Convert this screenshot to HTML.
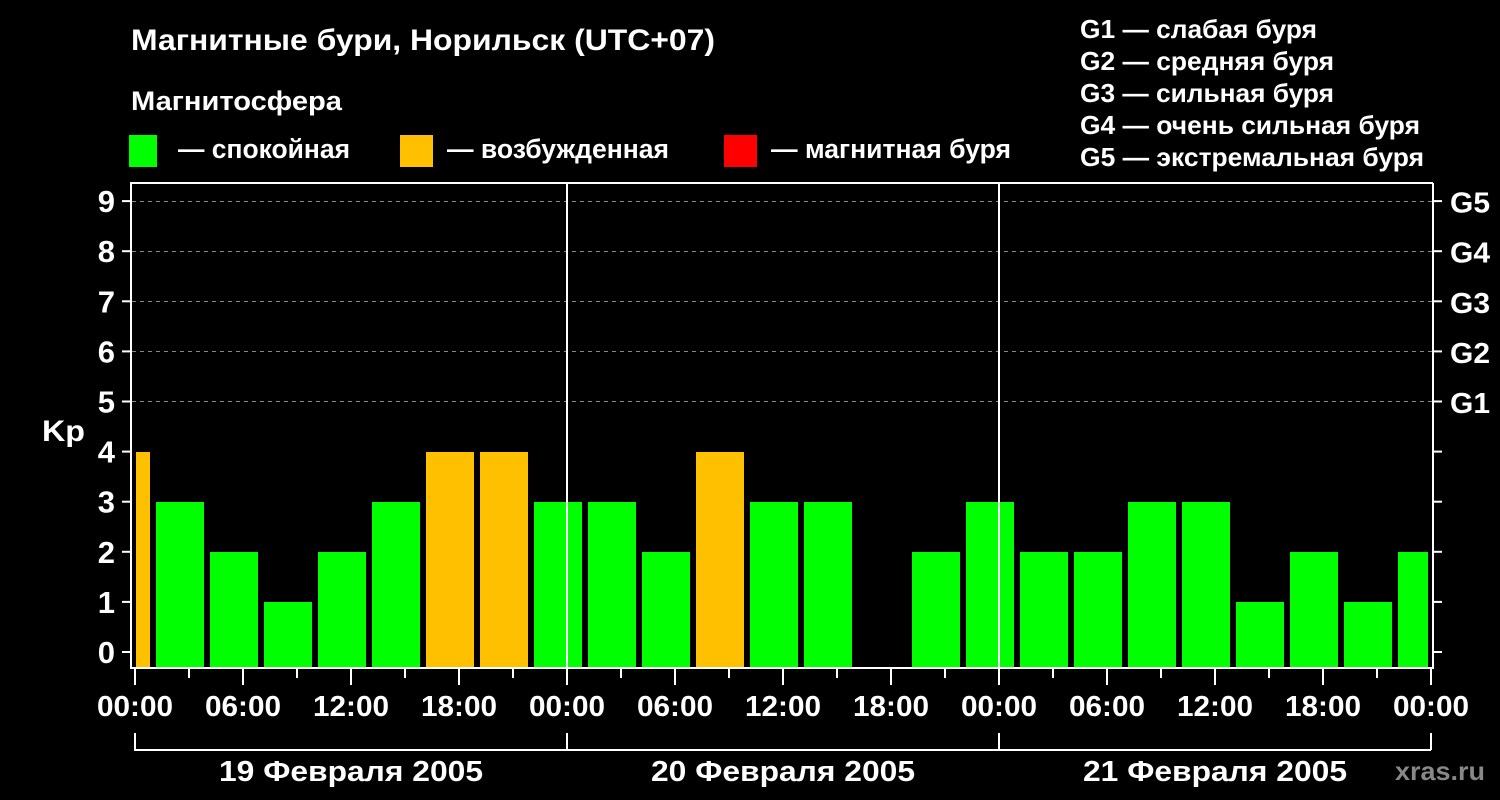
<!DOCTYPE html>
<html><head><meta charset="utf-8"><style>
html,body{margin:0;padding:0;background:#000;}
svg{display:block;}
text{font-family:"Liberation Sans",sans-serif;font-weight:bold;fill:#fff;}
</style></head><body>
<svg width="1500" height="800" viewBox="0 0 1500 800">
<rect width="1500" height="800" fill="#000"/>
<text x="131" y="50" font-size="30" textLength="584" lengthAdjust="spacingAndGlyphs">Магнитные бури, Норильск (UTC+07)</text>
<text x="131" y="110" font-size="27" textLength="211" lengthAdjust="spacingAndGlyphs">Магнитосфера</text>
<rect x="129" y="135" width="28" height="32" fill="#00ff00"/>
<text x="178" y="158" font-size="27" textLength="172" lengthAdjust="spacingAndGlyphs">— спокойная</text>
<rect x="400" y="135" width="33" height="32" fill="#ffc000"/>
<text x="447" y="158" font-size="27" textLength="222" lengthAdjust="spacingAndGlyphs">— возбужденная</text>
<rect x="724" y="135" width="33" height="32" fill="#ff0000"/>
<text x="771" y="158" font-size="27" textLength="240" lengthAdjust="spacingAndGlyphs">— магнитная буря</text>
<g font-size="26">
<text x="1080" y="38" textLength="237" lengthAdjust="spacingAndGlyphs">G1 — слабая буря</text>
<text x="1080" y="70" textLength="254" lengthAdjust="spacingAndGlyphs">G2 — средняя буря</text>
<text x="1080" y="102" textLength="254" lengthAdjust="spacingAndGlyphs">G3 — сильная буря</text>
<text x="1080" y="134" textLength="340" lengthAdjust="spacingAndGlyphs">G4 — очень сильная буря</text>
<text x="1080" y="166" textLength="344" lengthAdjust="spacingAndGlyphs">G5 — экстремальная буря</text>
</g>
<g stroke="#888" stroke-width="1" stroke-dasharray="4,4">
<line x1="132" y1="201.5" x2="1432" y2="201.5"/>
<line x1="132" y1="251.5" x2="1432" y2="251.5"/>
<line x1="132" y1="301.5" x2="1432" y2="301.5"/>
<line x1="132" y1="351.5" x2="1432" y2="351.5"/>
<line x1="132" y1="401.5" x2="1432" y2="401.5"/>
</g>
<g id="bars"></g>
<g stroke="#fff" stroke-width="2" fill="none">
<polyline points="1433,183 131,183 131,668 1433,668 1433,183"/>
<line x1="567" y1="183" x2="567" y2="668"/>
<line x1="999" y1="183" x2="999" y2="668"/>
</g>
<g id="ticks" stroke="#fff" stroke-width="2"></g>
<g font-size="31" text-anchor="end" id="ylab"></g>
<text x="42" y="441" font-size="30" textLength="43" lengthAdjust="spacingAndGlyphs">Kp</text>
<g font-size="29" id="glab"></g>
<g font-size="29" id="xlab"></g>
<g stroke="#fff" stroke-width="2" fill="none">
<polyline points="135,733 135,750 1431,750"/>
<line x1="567" y1="733" x2="567" y2="750"/>
<line x1="999" y1="733" x2="999" y2="750"/>
<line x1="1431" y1="733" x2="1431" y2="750"/>
</g>
<g font-size="29">
<text x="219" y="781" textLength="264" lengthAdjust="spacingAndGlyphs">19 Февраля 2005</text>
<text x="651" y="781" textLength="264" lengthAdjust="spacingAndGlyphs">20 Февраля 2005</text>
<text x="1083" y="781" textLength="264" lengthAdjust="spacingAndGlyphs">21 Февраля 2005</text>
</g>
<text x="1395" y="780" font-size="26" style="fill:#888" textLength="90" lengthAdjust="spacingAndGlyphs">xras.ru</text>
</svg>
<script>
var NS="http://www.w3.org/2000/svg";
function el(p,t,a,txt){var e=document.createElementNS(NS,t);for(var k in a)e.setAttribute(k,a[k]);if(txt!=null)e.textContent=txt;document.getElementById(p).appendChild(e);}
var v=[4,3,2,1,2,3,4,4,3,3,2,4,3,3,0,2,3,2,2,3,3,1,2,1,2];
v.forEach(function(k,i){if(!k)return;var x1=102+54*i,x2=x1+48;if(x1<136)x1=136;if(x2>1428)x2=1428;var top=652-50*k;
el("bars","rect",{x:x1,y:top,width:x2-x1,height:668-top,fill:k>=4?"#ffc000":"#00ff00"});});
for(var k=0;k<=9;k++){var y=652-50.1*k;el("ticks","line",{x1:122,y1:y,x2:131,y2:y});el("ticks","line",{x1:1433,y1:y,x2:1442,y2:y});
el("ylab","text",{x:115,y:y+11},k);}
for(var g=1;g<=5;g++){el("glab","text",{x:1450,y:402-50.1*(g-1)+11,textLength:40,lengthAdjust:"spacingAndGlyphs"},"G"+g);}
var labs=["00:00","06:00","12:00","18:00"];
for(var h=0;h<=72;h+=3){var x=135+18*h;el("ticks","line",{x1:x,y1:668,x2:x,y2:h%6==0?685:678});
if(h%6==0)el("xlab","text",{x:x-38,y:716,textLength:76,lengthAdjust:"spacingAndGlyphs"},labs[(h/6)%4]);}
</script>
</body></html>
